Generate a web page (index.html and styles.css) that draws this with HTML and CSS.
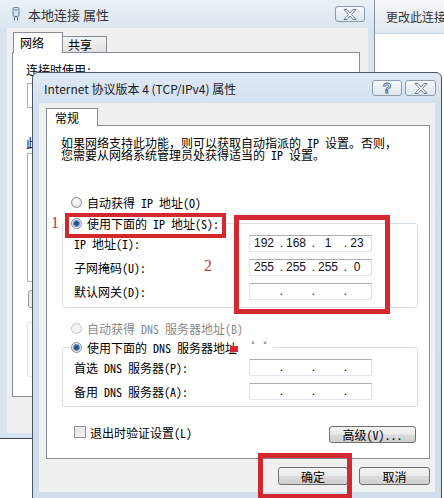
FILE: index.html
```html
<!DOCTYPE html>
<html lang="zh-CN">
<head>
<meta charset="utf-8">
<title>Internet 协议版本 4 (TCP/IPv4) 属性</title>
<link rel="stylesheet" href="styles.css">
</head>
<body>
<div class="desk">

  <div class="back">
    <div class="back-tb">
      <svg class="plug" viewBox="0 0 8 15"><rect x="1" y="0.5" width="6" height="9" rx="1.5" fill="#d3e2f1" stroke="#687b93"/><path d="M2.5 9.5v4M5.5 9.5v4" stroke="#687b93" stroke-width="1.2"/><path d="M2.5 3h3" stroke="#687b93"/></svg>
      <span class="ttl">本地连接 属性</span>
      <span class="tbtn xb"><svg viewBox="0 0 14 11"><path d="M1 0.5h3l3 3.5 3-3.5h3l-4.5 5 4.5 5h-3l-3-3.5-3 3.5h-3l4.5-5z" fill="#fff" stroke="#5c6d83" stroke-width="0.9"/></svg></span>
    </div>
    <div class="back-body">
      <div class="tabs">
        <span class="tab sel">网络</span>
        <span class="tab">共享</span>
      </div>
      <div class="back-panel">
        <div class="bl">连接时使用:</div>
        <div class="adapter"></div>
        <div class="bl bl2">此连接使用下列项目(O):</div>
        <div class="list"></div>
        <div class="bbtn">安装(N)...</div>
        <div class="desc"></div>
      </div>
    </div>
  </div>

  <div class="side">
    <div class="side-hd">更改此连接</div>
  </div>

  <div class="dlg">
    <div class="dlg-tb">
      <span class="dttl">Internet 协议版本 4 (TCP/IPv4) 属性</span>
      <span class="tbtn hb"><span class="q">?</span></span>
      <span class="tbtn xb2"><svg viewBox="0 0 14 11"><path d="M1 0.5h3l3 3.5 3-3.5h3l-4.5 5 4.5 5h-3l-3-3.5-3 3.5h-3l4.5-5z" fill="#fff" stroke="#5c6d83" stroke-width="0.9"/></svg></span>
    </div>
    <div class="dlg-body">
      <div class="dtabs"><span class="dtab">常规</span></div>
      <div class="panel">
        <p class="para">如果网络支持此功能，则可以获取自动指派的 IP 设置。否则，<br>您需要从网络系统管理员处获得适当的 IP 设置。</p>

        <div class="opt first"><span class="radio"></span>自动获得 IP 地址(O)</div>
        <fieldset class="grp g1">
          <legend><span class="opt lg"><span class="radio on"></span>使用下面的 IP 地址(S):</span></legend>
          <div class="row top"><span class="lbl">IP 地址(I):</span>
            <span class="ipf"><span class="seg">192</span><span class="dot">.</span><span class="seg">168</span><span class="dot">.</span><span class="seg">1</span><span class="dot">.</span><span class="seg last">23</span></span></div>
          <div class="row"><span class="lbl">子网掩码(U):</span>
            <span class="ipf"><span class="seg">255</span><span class="dot">.</span><span class="seg">255</span><span class="dot">.</span><span class="seg">255</span><span class="dot">.</span><span class="seg last">0</span></span></div>
          <div class="row"><span class="lbl">默认网关(D):</span>
            <span class="ipf"><span class="seg"></span><span class="dot">.</span><span class="seg"></span><span class="dot">.</span><span class="seg"></span><span class="dot">.</span><span class="seg last"></span></span></div>
        </fieldset>

        <div class="opt dis dns1"><span class="radio off"></span>自动获得 DNS 服务器地址(B)</div>
        <fieldset class="grp g2">
          <legend><span class="opt lg"><span class="radio on"></span>使用下面的 DNS 服务器地址<span class="ell">··</span></span></legend>
          <div class="row top"><span class="lbl">首选 DNS 服务器(P):</span>
            <span class="ipf"><span class="seg"></span><span class="dot">.</span><span class="seg"></span><span class="dot">.</span><span class="seg"></span><span class="dot">.</span><span class="seg last"></span></span></div>
          <div class="row"><span class="lbl">备用 DNS 服务器(A):</span>
            <span class="ipf"><span class="seg"></span><span class="dot">.</span><span class="seg"></span><span class="dot">.</span><span class="seg"></span><span class="dot">.</span><span class="seg last"></span></span></div>
        </fieldset>

        <div class="foot">
          <span class="chk-row"><span class="chk"></span>退出时验证设置(L)</span>
          <span class="btn adv">高级(V)...</span>
        </div>
      </div>
      <div class="actions">
        <span class="btn ok">确定</span>
        <span class="btn">取消</span>
      </div>
    </div>
  </div>

  <div class="mk mk1"></div>
  <div class="mk mk2"></div>
  <div class="mk mk3"></div>
  <div class="rdot"></div>
  <span class="num n1">1</span>
  <span class="num n2">2</span>
</div>
</body>
</html>
```
FILE: styles.css
```css
* { box-sizing: border-box; }
body {
  margin: 0;
  width: 444px;
  height: 498px;
  overflow: hidden;
  background: #fff;
  font-family: "Noto Sans Mono CJK SC", "Noto Sans CJK SC", monospace;
  font-size: 12px;
  color: #000;
}
.desk { position: relative; width: 444px; height: 498px; }

/* background window */
.back {
  position: absolute; left: 0; top: 0;
  width: 375px; height: 439px;
  background: #d7e3ef;
  border-right: 1px solid #8391a3;
  border-bottom: 1px solid #3c434c;
  display: flex; flex-direction: column;
}
.back-tb {
  height: 28px; flex: none;
  display: flex; align-items: center;
  padding: 0 9px 0 12px;
  background: linear-gradient(#eaf0f6, #dbe5ef);
}
.plug { width: 8px; height: 15px; margin-right: 8px; }
.ttl { font-family: "Noto Sans CJK SC", sans-serif; font-size: 13px; color: #333; }
.tbtn {
  width: 30px; height: 16px;
  border: 1px solid #8d9db1; border-radius: 3px;
  background: linear-gradient(#f7f9fc, #dde5ee);
  display: flex; align-items: center; justify-content: center;
}
.tbtn svg { width: 14px; height: 11px; }
.xb { margin-left: auto; }
.back-body {
  flex: 1;
  margin: 0 6px 5px 7px;
  background: #f0f0f0;
  padding: 4px 0 0 5px;
  display: flex; flex-direction: column;
}
.tabs { display: flex; align-items: flex-end; height: 20px; }
.tab {
  font-family: "Noto Sans CJK SC", sans-serif;
  height: 16px; width: 44px;
  padding-left: 5px; line-height: 15px;
  border: 1px solid #898c95; border-left: none; border-bottom: none;
  background: linear-gradient(#f4f4f4, #e2e2e2);
}
.tab.sel {
  width: 50px; height: 21px; margin-left: 1px; margin-bottom: -1px;
  padding-left: 6px; line-height: 20px;
  background: #fff; border-left: 1px solid #898c95;
  position: relative; z-index: 1;
}
.back-panel {
  width: 348px; height: 345px;
  background: #fff; border: 1px solid #898c95;
  padding: 10px 0 0 13px;
}
.bl { line-height: 14px; }
.adapter { margin: 6px 0 0 1px; width: 318px; height: 25px; border: 1px solid #adb2b9; background: #fff; }
.bl2 { margin-top: 28px; }
.list { margin: 3px 0 0 1px; width: 318px; height: 129px; border: 1px solid #adb2b9; }
.bbtn { margin: 8px 0 0 2px; width: 80px; height: 18px; border: 1px solid #9a9a9a; border-radius: 3px; background: #eee; font-size: 11px; text-align: center; }
.desc { margin: 14px 0 0 1px; width: 318px; height: 55px; border: 1px solid #dde3e8; border-radius: 3px; }

/* side window */
.side {
  position: absolute; left: 375px; top: 0;
  width: 69px; height: 498px;
  background: #fff;
}
.side-hd {
  height: 34px; line-height: 33px;
  padding-left: 11px;
  font-family: "Noto Sans CJK SC", sans-serif; color: #333;
  white-space: nowrap; overflow: hidden;
  background: linear-gradient(#f5f8fb, #e1e8f1);
  border-bottom: 1px solid #c8d2dd;
}

/* front dialog */
.dlg {
  position: absolute; left: 32px; top: 72px;
  width: 410px; height: 430px;
  border: 1px solid #4b5563;
  border-radius: 6px 6px 0 0;
  background: linear-gradient(#e0eaf6 0, #d3e0ef 30px, #cfdded 100%);
  display: flex; flex-direction: column;
}
.dlg-tb {
  height: 30px; flex: none;
  display: flex; align-items: center; gap: 3px;
  padding: 0 5px 0 11px;
}
.dttl { font-family: "Noto Sans CJK SC", sans-serif; font-size: 12px; color: #1b1b1b; margin-right: auto; }
.q {
  font-family: "Liberation Sans", sans-serif; font-weight: bold; font-size: 14px; line-height: 14px;
  color: #fff; -webkit-text-stroke: 0.9px #5c6d83;
}
.xb2 { width: 31px; }
.dlg-body {
  flex: none; height: 389px;
  margin: 0 6px;
  background: #f0f0f0;
  padding: 5px 5px 0 7px;
}
.dtabs { display: flex; height: 17px; }
.dtab {
  font-family: "Noto Sans CJK SC", sans-serif;
  width: 52px; height: 18px;
  padding-left: 8px; line-height: 17px;
  background: #fff;
  border: 1px solid #898c95; border-bottom: none;
  position: relative; z-index: 1;
}
.panel {
  width: 384px; height: 334px;
  background: #fff; border: 1px solid #898c95;
  padding: 11px 0 0 14px;
}
.para { margin: 0; line-height: 12px; white-space: nowrap; }
.opt { display: flex; align-items: center; height: 18px; gap: 5px; margin-left: 10px; white-space: nowrap; }
.opt.first { margin-top: 32px; }
.opt.lg { margin-left: 0; padding-right: 2px; }
.radio {
  flex: none; width: 11px; height: 11px; border-radius: 50%;
  border: 1px solid #8b8d90;
  background: radial-gradient(circle at 50% 40%, #fff 0, #f2f2f2 40%, #d5d5d5 100%);
}
.radio.on { background: radial-gradient(circle, #1d3f6e 0, #2f5b92 2px, #7ea4d0 3.2px, #f4f4f4 4.2px, #dadada 100%); }
.radio.off { border-color: #c2c4c7; background: #f4f4f4; }
.opt.dis { color: #8a8a8a; }
.dns1 { margin-top: 11px; }
.grp {
  margin: 3px 0 0 1px; width: 356px;
  padding: 0 0 4px 0;
  border: 1px solid #d5dfe5; border-radius: 3px;
  min-width: 0;
}
.grp legend { padding: 0; margin-left: 8px; }
.g2 { margin-top: 1px; padding-bottom: 3px; }
.row { display: flex; align-items: center; height: 24px; padding-left: 11px; white-space: nowrap; }
.row.top { margin-top: -1px; }
.lbl { width: 175px; }
.ipf {
  width: 123px; height: 17px;
  border: 1px solid; border-color: #abadb3 #dbdfe6 #e3e9ef #e2e3ea;
  background: #fff;
  display: flex; align-items: center;
  padding-left: 1px;
  font-family: "Liberation Sans", sans-serif; font-size: 12px; color: #111;
}
.seg { width: 26px; text-align: center; }
.seg.last { width: 20px; }
.dot { width: 6px; text-align: right; }
.ell { color: #9a9a9a; margin-left: 5px; position: relative; top: -5px; }
.foot { display: flex; align-items: flex-start; margin-top: 16px; }
.chk-row { display: flex; align-items: center; gap: 4px; height: 18px; margin-left: 13px; }
.chk { width: 12px; height: 12px; border: 1px solid #8b8d90; background: linear-gradient(135deg, #dcdcdc, #f8f8f8); box-shadow: inset 0 0 0 1px #f4f4f4; }
.btn {
  height: 18px;
  display: flex; align-items: center; justify-content: center;
  border: 1px solid #707070; border-radius: 3px;
  background: linear-gradient(#f3f3f3 0%, #ebebeb 49%, #dcdcdc 51%, #cfcfcf 100%);
  white-space: nowrap;
}
.adv { width: 87px; height: 17px; margin: 3px 13px 0 auto; }
.actions { display: flex; justify-content: flex-end; gap: 11px; margin-top: 8px; }
.actions .btn { width: 71px; font-family: "Noto Sans CJK SC", sans-serif; }
.actions .ok { width: 70px; }

/* annotations */
.mk { position: absolute; border: 5px solid #d3282d; }
.mk1 { left: 65px; top: 213px; width: 161px; height: 25px; border-width: 4px; }
.mk2 { left: 234px; top: 215px; width: 156px; height: 99px; }
.mk3 { left: 258px; top: 453px; width: 94px; height: 46px; }
.rdot { position: absolute; left: 230px; top: 346px; width: 8px; height: 6px; background: #d3282d; }
.num { position: absolute; color: #c0393b; font-family: "Liberation Serif", serif; font-size: 16px; line-height: 16px; }
.n1 { left: 51px; top: 215px; }
.n2 { left: 204px; top: 258px; }
```
